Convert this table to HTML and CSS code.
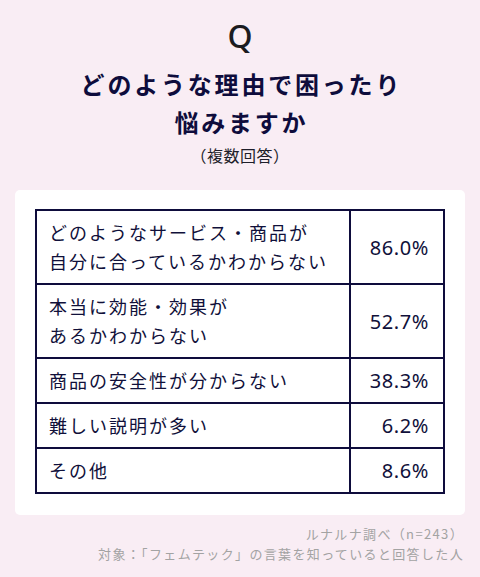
FILE: index.html
```html
<!DOCTYPE html>
<html lang="ja">
<head>
<meta charset="utf-8">
<link rel="stylesheet" href="styles.css">
</head>
<body>
<header class="head">
  <div class="q">Q</div>
  <h1 class="title">どのような理由で困ったり<br>悩みますか</h1>
  <p class="sub">（複数回答）</p>
</header>
<section class="card">
  <table class="results">
    <tr>
      <td class="label">どのようなサービス・商品が<br>自分に合っているかわからない</td>
      <td class="pct">86.0%</td>
    </tr>
    <tr>
      <td class="label">本当に効能・効果が<br>あるかわからない</td>
      <td class="pct">52.7%</td>
    </tr>
    <tr>
      <td class="label">商品の安全性が分からない</td>
      <td class="pct">38.3%</td>
    </tr>
    <tr>
      <td class="label">難しい説明が多い</td>
      <td class="pct">6.2%</td>
    </tr>
    <tr>
      <td class="label">その他</td>
      <td class="pct">8.6%</td>
    </tr>
  </table>
</section>
<footer class="note">
  <p>ルナルナ調べ（n=243）</p>
  <p>対象：「フェムテック」の言葉を知っていると回答した人</p>
</footer>
</body>
</html>
```
FILE: styles.css
```css
html, body {
  margin: 0;
  padding: 0;
}
body {
  background: #f9edf4;
  font-family: "Noto Sans CJK JP", "Noto Sans", sans-serif;
  color: #10103a;
  width: 480px;
  height: 577px;
  overflow: hidden;
}
.head {
  padding-top: 20px;
  text-align: center;
}
.q {
  font-family: "Noto Sans", sans-serif;
  font-weight: 500;
  font-size: 32px;
  line-height: 32px;
  color: #1b1b1f;
}
.title {
  margin: 13px 0 0;
  font-size: 24px;
  line-height: 38px;
  font-weight: 700;
  letter-spacing: 2.8px;
  padding-left: 2.8px;
  color: #0e0c3c;
}
.sub {
  margin: 3px 0 0;
  font-size: 16px;
  line-height: 22px;
  letter-spacing: 0.5px;
  color: #1e1e2a;
}
.card {
  margin: 24px 15px 0;
  background: #ffffff;
  border-radius: 5px;
  padding: 19px 20px 21px;
}
.results {
  width: 100%;
  border-collapse: collapse;
  table-layout: fixed;
}
.results td {
  border: 2px solid #0e0c3c;
  padding: 7px 0;
  line-height: 29px;
  vertical-align: middle;
}
.label {
  padding-left: 12px !important;
  font-size: 18px;
  letter-spacing: 2px;
}
.pct {
  width: 78px;
  padding-right: 14px !important;
  text-align: right;
  font-family: "Noto Sans", sans-serif;
  font-weight: 400;
  font-size: 20px;
  letter-spacing: 0.6px;
}
.note {
  margin-top: 9px;
  padding-right: 16px;
  text-align: right;
  color: #a3a3a3;
  font-size: 13px;
  line-height: 20px;
  letter-spacing: 1.35px;
}
.note p {
  margin: 0;
}
```
